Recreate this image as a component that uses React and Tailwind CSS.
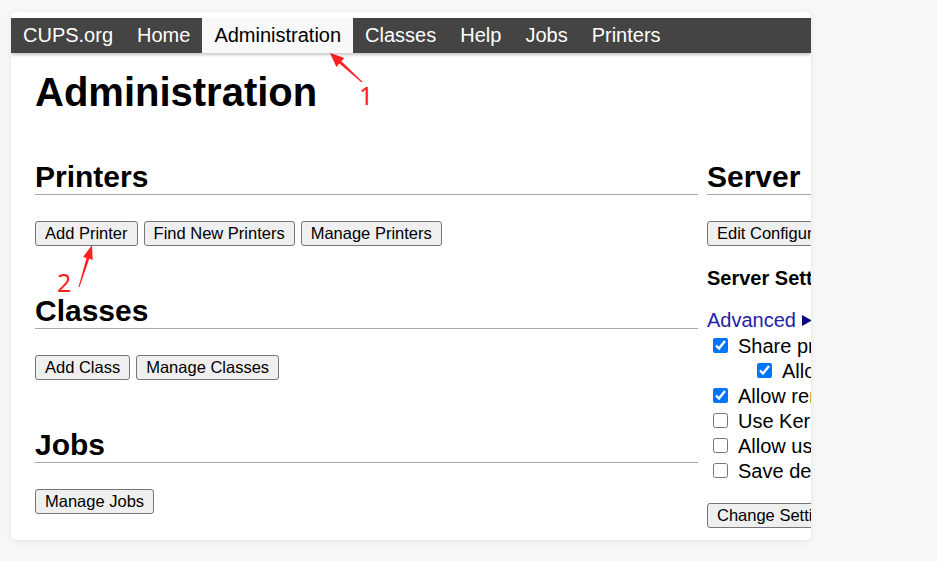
const NAV = ['CUPS.org', 'Home', 'Administration', 'Classes', 'Help', 'Jobs', 'Printers']

const SETTINGS = [
  { label: 'Share printers connected to this system', checked: true },
  { label: 'Allow printing from the Internet', checked: true, indent: true },
  { label: 'Allow remote administration', checked: true },
  { label: 'Use Kerberos authentication (FAQ)', checked: false },
  { label: 'Allow users to cancel any job (not just their own)', checked: false },
  { label: 'Save debugging information for troubleshooting', checked: false },
]

function Btn({ children }) {
  return (
    <button className="h-[25px] px-[9px] leading-[23px] text-[16.5px] text-black bg-[#efefef] border border-[#767676] rounded-[3px] whitespace-nowrap">
      {children}
    </button>
  )
}

function Heading({ children }) {
  return (
    <h2 className="text-[30px] font-bold leading-[34px] text-black border-b border-[#a6a6a6] whitespace-nowrap">
      {children}
    </h2>
  )
}

function Section({ title, buttons, first }) {
  return (
    <div className={first ? '' : 'mt-[48px]'}>
      <Heading>{title}</Heading>
      <div className="mt-[26px] flex gap-[6px]">
        {buttons.map((b) => <Btn key={b}>{b}</Btn>)}
      </div>
    </div>
  )
}

// red markup arrows drawn over the screenshot
function Annotations() {
  return (
    <div className="absolute inset-0 pointer-events-none">
      <svg className="absolute left-0 top-0" width="937" height="561">
        <polygon
          fill="#ff2020"
          points="330,53 344.4,58 341.4,61.3 362.3,81.6 361.7,82.4 339.4,63.5 336.4,66.9"
        />
        <polygon
          fill="#ff2020"
          points="92,245 92.7,259.9 89.3,258.8 79.5,287.1 78.5,286.9 86.5,258 83.1,256.9"
        />
      </svg>
      <span className="absolute left-[359px] top-[80px] text-[25px] leading-[30px] text-[#ff2020] font-['Noto_Sans',sans-serif]">1</span>
      <span className="absolute left-[57px] top-[267px] text-[25px] leading-[30px] text-[#ff2020] font-['Noto_Sans',sans-serif]">2</span>
    </div>
  )
}

export default function App() {
  return (
    <div className="relative w-[937px] h-[561px] bg-[#f7f7f7] overflow-hidden font-['Liberation_Sans',Arial,sans-serif]">
      <div className="absolute left-[11px] top-[12px] w-[800px] h-[528px] bg-white rounded-[5px] shadow-[0_1px_6px_rgba(0,0,0,0.08)] overflow-hidden pt-[6px]">
        <nav className="flex h-[35px] bg-[#444444] shadow-[0_2px_3px_rgba(0,0,0,0.22)] relative z-10">
          {NAV.map((n) => (
            <a
              key={n}
              className={
                'px-[12px] text-[20px] leading-[35px] whitespace-nowrap ' +
                (n === 'Administration' ? 'bg-[#f8f8f8] text-black' : 'text-white')
              }
            >
              {n}
            </a>
          ))}
        </nav>

        <div className="px-[24px]">
          <h1 className="mt-[17px] text-[40px] font-bold leading-[44px] text-black">Administration</h1>

          <div className="mt-[46px] flex gap-[9px]">
            <div className="w-[663px] shrink-0">
              <Section first title="Printers" buttons={['Add Printer', 'Find New Printers', 'Manage Printers']} />
              <Section title="Classes" buttons={['Add Class', 'Manage Classes']} />
              <Section title="Jobs" buttons={['Manage Jobs']} />
            </div>

            <div className="w-[420px] shrink-0">
              <Heading>Server</Heading>
              <div className="mt-[26px] flex">
                <Btn>Edit Configuration File</Btn>
              </div>
              <p className="mt-[20px] text-[20px] font-bold leading-[24px] text-black whitespace-nowrap">Server Settings:</p>
              <p className="mt-[18px] text-[20px] leading-[24px] text-[#2222a8] whitespace-nowrap flex items-center">
                Advanced
                <svg className="ml-[6px]" width="10" height="11" viewBox="0 0 10 11">
                  <polygon points="0,0 10,5.5 0,11" fill="#0a0a80" />
                </svg>
              </p>
              <div className="mt-[1px]">
                {SETTINGS.map((s) => (
                  <label
                    key={s.label}
                    className={'flex items-center h-[25px] text-[20px] text-black whitespace-nowrap ' + (s.indent ? 'pl-[44px]' : '')}
                  >
                    <input
                      type="checkbox"
                      defaultChecked={s.checked}
                      className="w-[15px] h-[15px] ml-[6px] mr-[10px] accent-[#0075ff] shrink-0"
                    />
                    {s.label}
                  </label>
                ))}
              </div>
              <div className="mt-[20px] flex">
                <Btn>Change Settings</Btn>
              </div>
            </div>
          </div>
        </div>
      </div>
      <Annotations />
    </div>
  )
}
